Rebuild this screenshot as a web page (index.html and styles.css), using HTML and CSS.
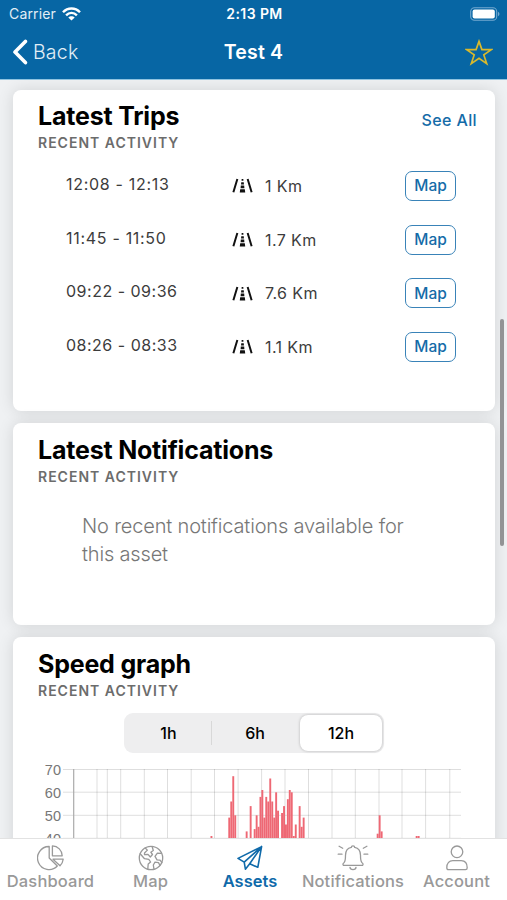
FILE: index.html
```html
<!DOCTYPE html>
<html lang="en">
<head>
    <meta charset="UTF-8">
    <meta name="viewport" content="width=device-width, initial-scale=1.0">
    <title>Test 4</title>
    <link rel="stylesheet" href="styles.css">
</head>
<body>
<div class="app">

    <header>
        <div class="status-bar">
            <div class="carrier">
                <span>Carrier</span>
                <svg width="19" height="14" viewBox="0 0 19 14" fill="none" stroke="white" stroke-width="2.4">
                    <path d="M1 5.2C5.7 0.2 13.3 0.2 18 5.2"/>
                    <path d="M4.1 8.3C7.2 5.1 11.8 5.1 14.9 8.3"/>
                    <path d="M9.5 13.6L6.3 10.4C8 8.7 11 8.7 12.7 10.4Z" fill="white" stroke="none"/>
                </svg>
            </div>
            <span class="time">2:13 PM</span>
            <svg class="battery" width="30" height="14" viewBox="0 0 30 14">
                <rect x="0.7" y="0.7" width="26" height="12.6" rx="3.8" fill="none" stroke="#74a9cf" stroke-width="1.1"/>
                <rect x="2.6" y="2.6" width="22.2" height="8.8" rx="2" fill="white"/>
                <path d="M28 4.8C30 5.6 30 8.4 28 9.2Z" fill="#74a9cf"/>
            </svg>
        </div>
        <div class="nav-bar">
            <a class="back">
                <svg width="16" height="26" viewBox="0 0 16 26" fill="none" stroke="white" stroke-width="3.6" stroke-linecap="round" stroke-linejoin="round">
                    <path d="M13.4 2.4L3 13L13.4 23.6"/>
                </svg>
                <span>Back</span>
            </a>
            <h1>Test 4</h1>
            <svg class="star" width="28" height="27" viewBox="0 0 28 27" fill="none" stroke="#d9b92c" stroke-width="1.7" stroke-linejoin="miter">
                <path d="M14 2.4L16.9 10.6H26.4L18.8 15.9L21.7 24.6L14 19.3L6.3 24.6L9.2 15.9L1.6 10.6H11.1Z"/>
            </svg>
        </div>
    </header>

    <main>
        <section class="card trips">
            <div class="card-head">
                <h2>Latest Trips</h2>
                <a class="see-all">See All</a>
            </div>
            <h3>RECENT ACTIVITY</h3>
            <ul>
                <li>
                    <span class="hours">12:08 - 12:13</span>
                    <svg class="road" viewBox="0 0 20 14"><use href="#road"/></svg>
                    <span class="distance">1 Km</span>
                    <button>Map</button>
                </li>
                <li>
                    <span class="hours">11:45 - 11:50</span>
                    <svg class="road" viewBox="0 0 20 14"><use href="#road"/></svg>
                    <span class="distance">1.7 Km</span>
                    <button>Map</button>
                </li>
                <li>
                    <span class="hours">09:22 - 09:36</span>
                    <svg class="road" viewBox="0 0 20 14"><use href="#road"/></svg>
                    <span class="distance">7.6 Km</span>
                    <button>Map</button>
                </li>
                <li>
                    <span class="hours">08:26 - 08:33</span>
                    <svg class="road" viewBox="0 0 20 14"><use href="#road"/></svg>
                    <span class="distance">1.1 Km</span>
                    <button>Map</button>
                </li>
            </ul>
        </section>

        <section class="card notifications">
            <h2>Latest Notifications</h2>
            <h3>RECENT ACTIVITY</h3>
            <p>No recent notifications available for<br>this asset</p>
        </section>

        <section class="card speed">
            <h2>Speed graph</h2>
            <h3>RECENT ACTIVITY</h3>
            <div class="segments">
                <span>1h</span>
                <span class="divided">6h</span>
                <span class="selected">12h</span>
            </div>
            <svg class="chart" id="chart" width="430" height="90" viewBox="38 760 430 90">
                <g class="labels">
                    <text x="61" y="774.5">70</text>
                    <text x="61" y="797.5">60</text>
                    <text x="61" y="820.5">50</text>
                    <text x="61" y="843.5">40</text>
                </g>
                <path class="grid" d="M63 769.5H461M63 792.2H461M63 815.3H461M63 838.3H461"/>
                <path class="grid" d="M97 769V850M107.3 769V850M120.7 769V850M144.3 769V850M167.5 769V850M191.2 769V850M214.5 769V850M238.1 769V850M261.6 769V850M285 769V850M308.5 769V850M332 769V850M355.3 769V850M379 769V850M402 769V850M425.6 769V850M449.8 769V850"/>
                <path class="axis" d="M73.7 769V850"/>
                <g id="bars"></g>
            </svg>
        </section>
    </main>

    <div class="scrollbar"></div>

    <nav class="tabs">
        <a>
            <svg width="28" height="26" viewBox="0 0 28 26">
                <path d="M12.2 1.5A11.5 11.5 0 1 0 20.3 21L12.2 13Z"/>
                <path d="M15.4 0.9V10.8H25.2A10 10 0 0 0 15.4 0.9Z"/>
                <path d="M16 14.2H26.2A10.8 10.8 0 0 1 23 20.7Z"/>
            </svg>
            <span>Dashboard</span>
        </a>
        <a>
            <svg width="26" height="26" viewBox="0 0 26 26">
                <circle cx="13" cy="13" r="11.7"/>
                <path d="M2.2 8.8L6.5 13.7L10.8 14.4L12.6 17L10.2 19L9.8 24M7.2 3L9.4 5.1L6.5 8L6.5 9.7L10 9.4L12.3 12L14.5 9.5L12.8 7.2L15.3 5.5L14.1 1.5M23.4 8.3L19.4 8.1L17 11.4L19 14.8L22 15.2L23.9 17.5M16 24.2L15.3 20L17 17.2L20.5 17.6L22 20.5"/>
            </svg>
            <span>Map</span>
        </a>
        <a class="active">
            <svg width="28" height="26" viewBox="0 0 28 26">
                <path d="M25.6 1.6L2 13.4L8.2 17.1L25.6 1.6L21.8 22.3L13.7 18.8L25.6 1.6M8.2 17.1L9.4 24.2L13.7 18.8" stroke-width="1.6"/>
            </svg>
            <span>Assets</span>
        </a>
        <a>
            <svg width="32" height="26" viewBox="0 0 32 26">
                <path d="M6.4 20.4Q5.2 18.9 7.2 17.4Q8.5 16 8.5 10.3C8.5 5.8 11.2 3 14.3 2.4Q14.4 0.8 16 0.8Q17.6 0.8 17.7 2.4C20.8 3 23.5 5.8 23.5 10.3Q23.5 16 24.8 17.4Q26.8 18.9 25.6 20.4Z"/>
                <path d="M13 22.4Q13.2 24.6 16 24.6Q18.8 24.6 19 22.4M1.2 9.2H5M2.1 1.3L5.7 3.2M27 9.2H30.8M26.3 3.2L29.9 1.3"/>
            </svg>
            <span>Notifications</span>
        </a>
        <a>
            <svg width="26" height="26" viewBox="0 0 26 26">
                <circle cx="13" cy="6.8" r="5.8"/>
                <path d="M4.5 24.7Q2.8 24.7 2.8 22.8C2.8 17.8 5.3 15.6 8.8 15.6H17.2C20.7 15.6 23.2 17.8 23.2 22.8Q23.2 24.7 21.5 24.7Z"/>
            </svg>
            <span>Account</span>
        </a>
    </nav>
</div>

    <!-- Shared road icon -->
    <svg width="0" height="0" class="defs">
        <defs>
            <g id="road">
                <path d="M5.1 0.8L1.3 13.4M14.9 0.8L18.7 13.4" fill="none" stroke="#111" stroke-width="1.9"/>
                <path d="M9.2 0.8H10.8L10.9 2.5H9.1ZM8.8 3.8H11.2L11.4 6H8.6ZM8.4 7.1H11.6L11.8 9.5H8.2ZM7.8 10.5H12.2L12.6 13.7H7.4Z" fill="#111"/>
            </g>
        </defs>
    </svg>

    <script>
        // Each entry is the left edge of a bar and its speed
        const speeds = [
            [210.5, 41], [228.3, 49], [230.3, 56], [232.3, 67], [234.3, 50],
            [245.7, 43], [249.7, 54], [253.7, 44], [255.7, 50], [257.6, 45],
            [259.5, 58], [261.4, 61], [263.4, 49], [265.3, 58], [267.3, 56],
            [269.3, 66], [271.3, 56], [273.3, 49], [275.2, 60], [277.1, 52],
            [281.1, 51], [283.1, 54], [285, 46], [286.9, 57], [288.8, 61],
            [290.8, 60], [292.8, 41], [294.8, 46], [298.7, 54], [300.7, 45],
            [302.7, 49], [376.7, 42], [378.7, 50], [380.7, 43], [415.7, 41], [417.7, 41]
        ];
        const bars = document.getElementById('bars');

        speeds.forEach(([x, speed]) => {
            const bar = document.createElementNS('http://www.w3.org/2000/svg', 'rect');
            bar.setAttribute('x', x);
            bar.setAttribute('y', 838.3 - (speed - 40) * 2.3);
            bar.setAttribute('width', 1.9);
            bar.setAttribute('height', speed * 2.3);
            bars.appendChild(bar);
        });
    </script>

</body>
</html>
```
FILE: styles.css
```css
* {
    box-sizing: border-box;
}

body {
    margin: 0;
    font-family: Inter, "Liberation Sans", sans-serif;
    background-color: #eff1f3;
    color: black;
}

h1, h2, h3, p, ul {
    margin: 0;
    padding: 0;
}

.app {
    height: 900px;
    display: flex;
    flex-direction: column;
    overflow: hidden;
    position: relative;
}

header {
    height: 80px;
    flex: none;
    background-color: #0766a4;
    border-bottom: 1px solid #8fc3e0;
    color: white;
}

.status-bar {
    height: 27px;
    padding: 0 7px 0 9px;
    display: grid;
    grid-template-columns: 1fr auto 1fr;
    align-items: center;
    font-size: 14px;
}

.carrier {
    display: flex;
    gap: 6px;
    align-items: center;
    letter-spacing: 0.15px;
    color: #e2eef6;
}

.time {
    font-weight: 600;
    letter-spacing: 0.4px;
}

.battery {
    justify-self: end;
}

.nav-bar {
    height: 50px;
    padding: 0 14px 0 12px;
    display: grid;
    grid-template-columns: 1fr auto 1fr;
    align-items: center;
}

.back {
    display: flex;
    align-items: center;
    gap: 5px;
    font-size: 19.5px;
    font-weight: 300;
    letter-spacing: 0.2px;
    color: #e2eef6;
}

h1 {
    padding-left: 2px;
    font-size: 19.5px;
    font-weight: 600;
    letter-spacing: 0.2px;
}

.star {
    justify-self: end;
}

main {
    flex: 1;
    min-height: 0;
    overflow: hidden;
    padding: 10px 12px 0 13px;
    display: flex;
    flex-direction: column;
    gap: 12px;
}

.card {
    flex: none;
    background-color: white;
    border-radius: 8px;
    padding: 12px 18px 0 25px;
    box-shadow: 0 0 16px rgba(0, 0, 0, 0.12);
}

.trips {
    height: 321px;
    padding-top: 11px;
}

.notifications {
    height: 202px;
}

.speed {
    height: 300px;
}

.card-head {
    display: flex;
    justify-content: space-between;
}

h2 {
    height: 30px;
    font-size: 25px;
    line-height: 30px;
    font-weight: 700;
    letter-spacing: -0.2px;
}

h3 {
    font-size: 14px;
    line-height: 24px;
    font-weight: 600;
    letter-spacing: 1px;
    color: #6c6c6c;
}

.see-all {
    padding-top: 8px;
    font-size: 16px;
    line-height: 22px;
    font-weight: 500;
    letter-spacing: 0.4px;
    color: #146ba8;
}

ul {
    list-style: none;
    padding: 4px 21px 0 28px;
}

li {
    height: 53.7px;
    display: grid;
    grid-template-columns: 166px 33px 1fr 51px;
    align-items: center;
    font-size: 16px;
    color: #3c3c3c;
}

.hours {
    padding-bottom: 4px;
    letter-spacing: 0.5px;
}

li:nth-child(-n+2) .hours {
    letter-spacing: 0.7px;
}

.distance {
    letter-spacing: 0.4px;
}

.road {
    width: 21px;
    height: 15px;
}

button {
    height: 30px;
    padding: 0;
    background-color: white;
    border: 1.5px solid #3983b8;
    border-radius: 7px;
    color: #146ba8;
    font-family: inherit;
    font-size: 15.5px;
    font-weight: 500;
}

.notifications p {
    padding: 23px 0 0 44px;
    font-size: 20px;
    line-height: 28px;
    font-weight: 300;
    letter-spacing: -0.17px;
    color: #777;
}

.segments {
    width: 260px;
    height: 40px;
    margin: 10px 0 7px 86px;
    padding: 2px;
    display: grid;
    grid-template-columns: 85px 88px 1fr;
    background-color: #eeeeef;
    border-radius: 9px;
    font-size: 16px;
    font-weight: 500;
    text-align: center;
    line-height: 36px;
}

.divided {
    background: linear-gradient(#d8d8d8, #d8d8d8) left center / 1px 24px no-repeat;
}

.selected {
    margin-left: 1px;
    background-color: white;
    border-radius: 8px;
    box-shadow: 0 0 3px rgba(0, 0, 0, 0.25);
}

.chart {
    display: block;
}

.labels {
    font-family: "Liberation Sans", Arial, sans-serif;
    font-size: 14.5px;
    fill: #777;
    text-anchor: end;
}

.grid {
    stroke: #000;
    stroke-opacity: 0.13;
    stroke-width: 1;
}

.axis {
    stroke: #aaa;
    stroke-width: 1.2;
}

#bars {
    fill: #ee6874;
}

.scrollbar {
    position: absolute;
    top: 319px;
    right: 3px;
    width: 4px;
    height: 227px;
    border-radius: 2px;
    background-color: #929395;
}

.tabs {
    height: 62px;
    flex: none;
    display: grid;
    grid-template-columns: 101px 99px 100px 106px 101px;
    background-color: white;
    border-top: 1px solid #e2e2e2;
    z-index: 1;
}

.tabs a {
    padding-top: 6px;
    display: flex;
    flex-direction: column;
    align-items: center;
    color: #999;
    font-size: 16.5px;
    line-height: 20px;
    font-weight: 500;
    letter-spacing: 0.15px;
    white-space: nowrap;
}

.tabs svg {
    fill: none;
    stroke: currentColor;
    stroke-width: 1.3;
    stroke-linejoin: round;
    stroke-linecap: round;
}

.tabs .active {
    color: #0f6aaa;
    font-weight: 600;
    letter-spacing: 0;
}

.defs {
    position: absolute;
}
```
